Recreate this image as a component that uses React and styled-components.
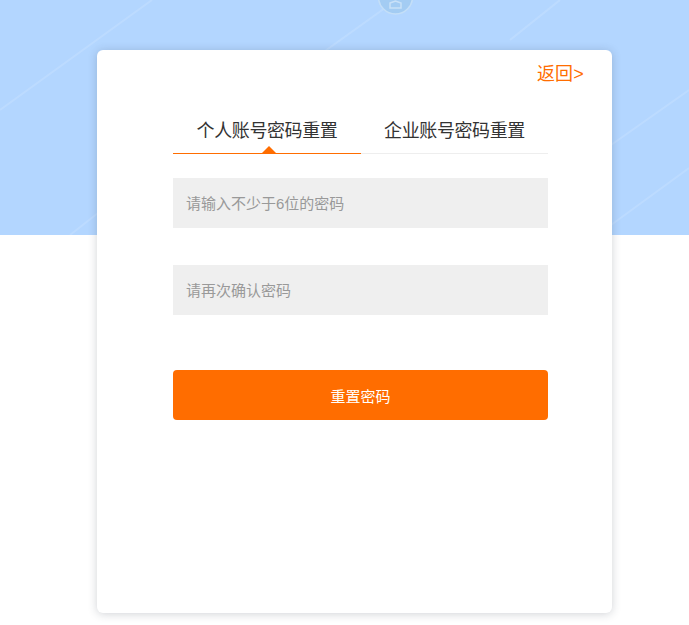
import React, { useState } from "react";
import styled, { createGlobalStyle } from "styled-components";

const GlobalStyle = createGlobalStyle`
  html, body {
    margin: 0;
    padding: 0;
    background: #fff;
    overflow: hidden;
    font-family: "Liberation Sans", "Noto Sans CJK SC", sans-serif;
  }
  * {
    box-sizing: border-box;
  }
`;

const Page = styled.div`
  position: relative;
  height: 625px;
  overflow: hidden;
`;

const Banner = styled.div`
  height: 235px;
  background: #b3d6ff;
`;

const BannerArt = styled.svg`
  display: block;
  width: 100%;
  height: 100%;
`;

const Card = styled.section`
  position: relative;
  width: 515px;
  height: 563px;
  margin: -185px 0 0 97px;
  padding: 12px 28px 0 76px;
  background: #fff;
  border-radius: 6px;
  box-shadow: 0 1px 10px rgba(40, 50, 70, 0.22);
`;

const BackRow = styled.div`
  display: flex;
  justify-content: flex-end;
  height: 44px;
`;

const BackLink = styled.a`
  color: #ff6d00;
  font-size: 18px;
  line-height: 24px;
  letter-spacing: 0.2px;
  text-decoration: none;
  cursor: pointer;
`;

const Form = styled.div`
  width: 375px;
`;

const Tabs = styled.div`
  display: flex;
  height: 48px;
  border-bottom: 1px solid #eee;
`;

const Tab = styled.button`
  position: relative;
  width: ${(p) => p.$width}px;
  height: 48px;
  padding: 0 0 2px;
  border: 0;
  border-bottom: 1px solid ${(p) => (p.$active ? "#ff6d00" : "transparent")};
  background: none;
  color: #333;
  font-family: inherit;
  font-size: 18px;
  letter-spacing: -0.4px;
  cursor: pointer;

  &::after {
    content: "";
    display: ${(p) => (p.$active ? "block" : "none")};
    position: absolute;
    left: 50%;
    bottom: 0;
    margin-left: -5px;
    border: 7px solid transparent;
    border-top: 0;
    border-bottom-color: #ff6d00;
  }
`;

const Field = styled.input`
  display: block;
  width: 100%;
  height: 50px;
  margin-top: ${(p) => p.$top}px;
  padding: 0 14px 0 13px;
  border: 0;
  outline: 0;
  background: #efefef;
  color: #333;
  font-family: inherit;
  font-size: 15px;

  &::placeholder {
    color: #999;
    opacity: 1;
  }
`;

const Submit = styled.button`
  display: block;
  width: 100%;
  height: 50px;
  margin-top: 55px;
  border: 0;
  border-radius: 4px;
  background: #ff6d00;
  color: #fff;
  font-family: inherit;
  font-size: 15px;
  cursor: pointer;
`;

const App = () => {
  const [tab, setTab] = useState(0);

  return (
    <Page>
      <GlobalStyle />
      <Banner>
        <BannerArt viewBox="0 0 689 235" aria-hidden="true">
          <g stroke="#fff" strokeOpacity="0.13" strokeWidth="2" fill="none">
            <path d="M0 110 L152 0" />
            <path d="M70 235 L98 213" />
            <path d="M325 51 L385 8" />
            <path d="M510 40 L560 0" />
            <path d="M611 145 L689 90" />
            <path d="M611 225 L689 168" />
          </g>
          <circle cx="395.5" cy="-3" r="17" fill="#a3ccf3" stroke="#c4dff8" strokeWidth="1.5" />
          <path d="M390 3 l5.5 -2 l5.5 2 v5 h-11 z" fill="none" stroke="#c9e1f8" strokeWidth="1.5" />
        </BannerArt>
      </Banner>
      <Card>
        <BackRow>
          <BackLink>返回&gt;</BackLink>
        </BackRow>
        <Form>
          <Tabs>
            <Tab $width={188} $active={tab === 0} onClick={() => setTab(0)}>
              个人账号密码重置
            </Tab>
            <Tab $width={187} $active={tab === 1} onClick={() => setTab(1)}>
              企业账号密码重置
            </Tab>
          </Tabs>
          <Field $top={24} type="password" placeholder="请输入不少于6位的密码" />
          <Field $top={37} type="password" placeholder="请再次确认密码" />
          <Submit>重置密码</Submit>
        </Form>
      </Card>
    </Page>
  );
};

export default App;
